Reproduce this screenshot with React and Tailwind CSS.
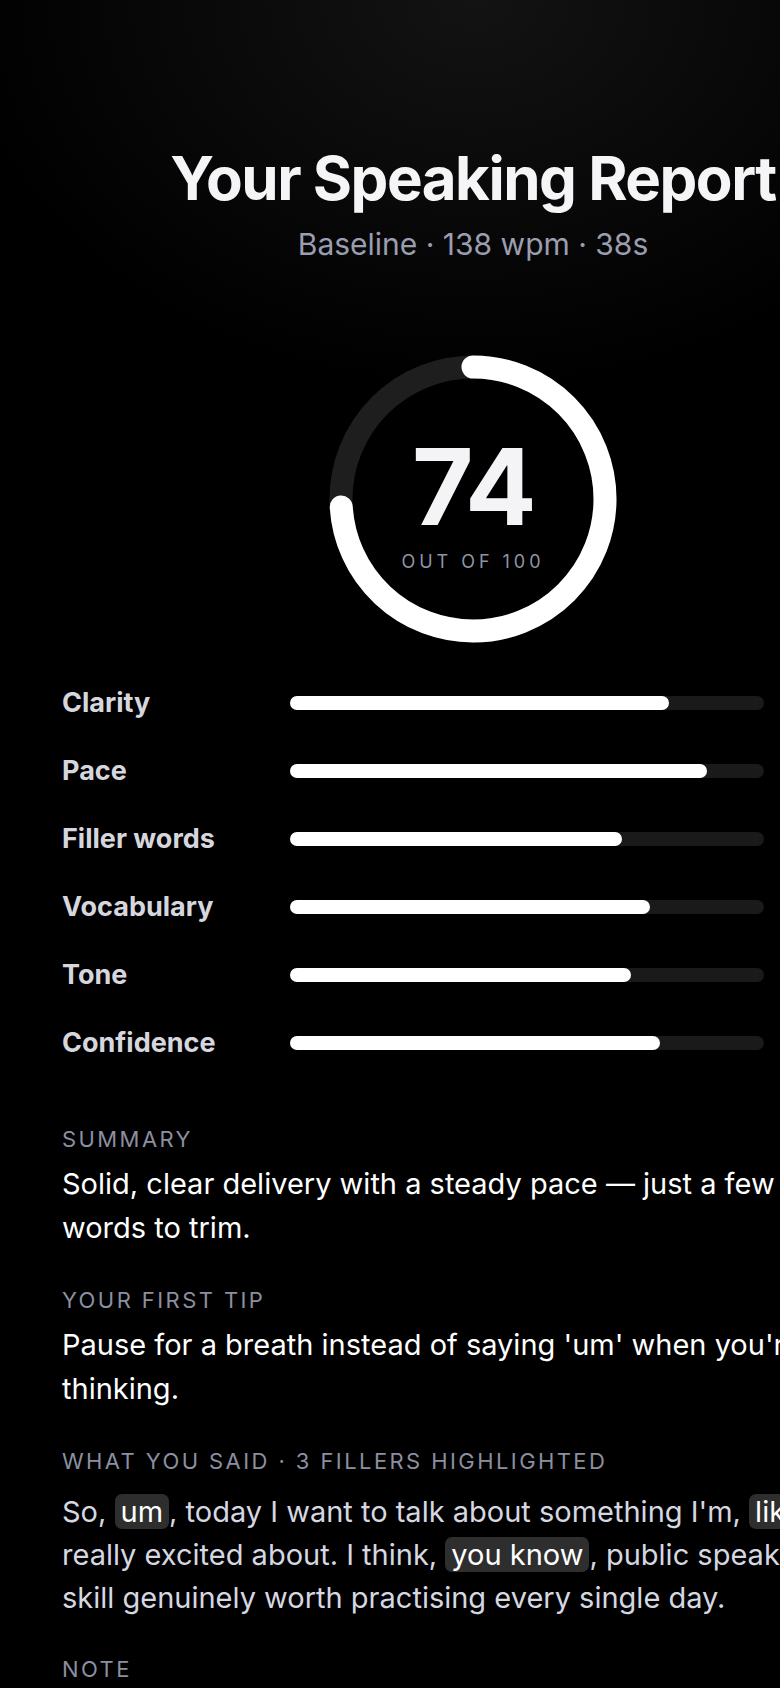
import React from 'react';

const scores = [
  { label: 'Clarity', value: 80 },
  { label: 'Pace', value: 88 },
  { label: 'Filler words', value: 70 },
  { label: 'Vocabulary', value: 76 },
  { label: 'Tone', value: 72 },
  { label: 'Confidence', value: 78 },
];

function ScoreRing({ score }) {
  const r = 132;
  const c = 2 * Math.PI * r;
  return (
    <div className="relative w-[290px] h-[290px]">
      <svg width="290" height="290" viewBox="0 0 290 290" className="-rotate-90">
        <circle cx="145" cy="145" r={r} fill="none" stroke="#1e1e1e" strokeWidth="23" />
        <circle
          cx="145"
          cy="145"
          r={r}
          fill="none"
          stroke="#ffffff"
          strokeWidth="23"
          strokeLinecap="round"
          strokeDasharray={c}
          strokeDashoffset={c * (1 - score / 100)}
        />
      </svg>
      <div className="absolute inset-0 flex flex-col items-center pt-[80px]">
        <div className="text-[106px] leading-none font-bold tracking-tight text-[#f4f4f6]">{score}</div>
        <div className="mt-[13px] text-[18px] leading-none tracking-[0.22em] text-[#8f94a8]">OUT OF 100</div>
      </div>
    </div>
  );
}

function SectionLabel({ children }) {
  return (
    <div className="text-[22px] leading-[28px] tracking-[0.11em] text-[#8b8fa0] uppercase">{children}</div>
  );
}

function Filler({ children }) {
  return <span className="rounded-[7px] bg-[#2e2e2e] px-[6px] text-white">{children}</span>;
}

export default function App() {
  return (
    <div className="w-full h-[1688px] overflow-hidden bg-black" style={{ fontFamily: 'Inter, "Noto Sans", sans-serif' }}>
      <div className="w-[946px] px-[62px] pt-[142px] pb-[40px] bg-[radial-gradient(ellipse_55%_22%_at_50%_0%,#131313_0%,#000000_100%)]">
        <header className="flex flex-col items-center">
          <h1 className="text-[60px] leading-[72px] font-bold tracking-tight text-[#f5f5f7]">Your Speaking Report</h1>
          <p className="mt-[10px] text-[30px] leading-[40px] text-[#9a9eb0]">Baseline · 138 wpm · 38s</p>
        </header>

        <div className="mt-[90px] flex justify-center">
          <ScoreRing score={74} />
        </div>

        <div className="mt-[25px] flex flex-col">
          {scores.map((s) => (
            <div key={s.label} className="grid grid-cols-[228px_474px_1fr] items-center h-[68px]">
              <div className="text-[27px] font-bold text-[#d6d7de]">{s.label}</div>
              <div className="h-[14px] rounded-full bg-[#1a1a1a]">
                <div className="h-full rounded-full bg-white" style={{ width: `${s.value}%` }} />
              </div>
              <div className="text-right text-[24px] font-semibold text-[#d6d7de]">{s.value}</div>
            </div>
          ))}
        </div>

        <section className="mt-[48px]">
          <SectionLabel>Summary</SectionLabel>
          <p className="mt-[9px] text-[29px] leading-[44px] text-white">
            Solid, clear delivery with a steady pace — just a few filler words to trim.
          </p>
        </section>

        <section className="mt-[36px]">
          <SectionLabel>Your first tip</SectionLabel>
          <p className="mt-[9px] text-[29px] leading-[44px] text-white">
            Pause for a breath instead of saying 'um' when you're thinking.
          </p>
        </section>

        <section className="mt-[36px]">
          <SectionLabel>What you said · 3 fillers highlighted</SectionLabel>
          <p className="mt-[15px] text-[29px] leading-[43px] text-[#d5d7e1]">
            So, <Filler>um</Filler>, today I want to talk about something I'm, <Filler>like</Filler>, really excited
            about. I think, <Filler>you know</Filler>, public speaking is a skill genuinely worth practising every single
            day.
          </p>
        </section>

        <section className="mt-[36px]">
          <SectionLabel>Note</SectionLabel>
          <p className="mt-[9px] text-[26px] leading-[40px] text-[#9a9eb0]">
            Scores are estimates based on a single recording.
          </p>
        </section>
      </div>
    </div>
  );
}
